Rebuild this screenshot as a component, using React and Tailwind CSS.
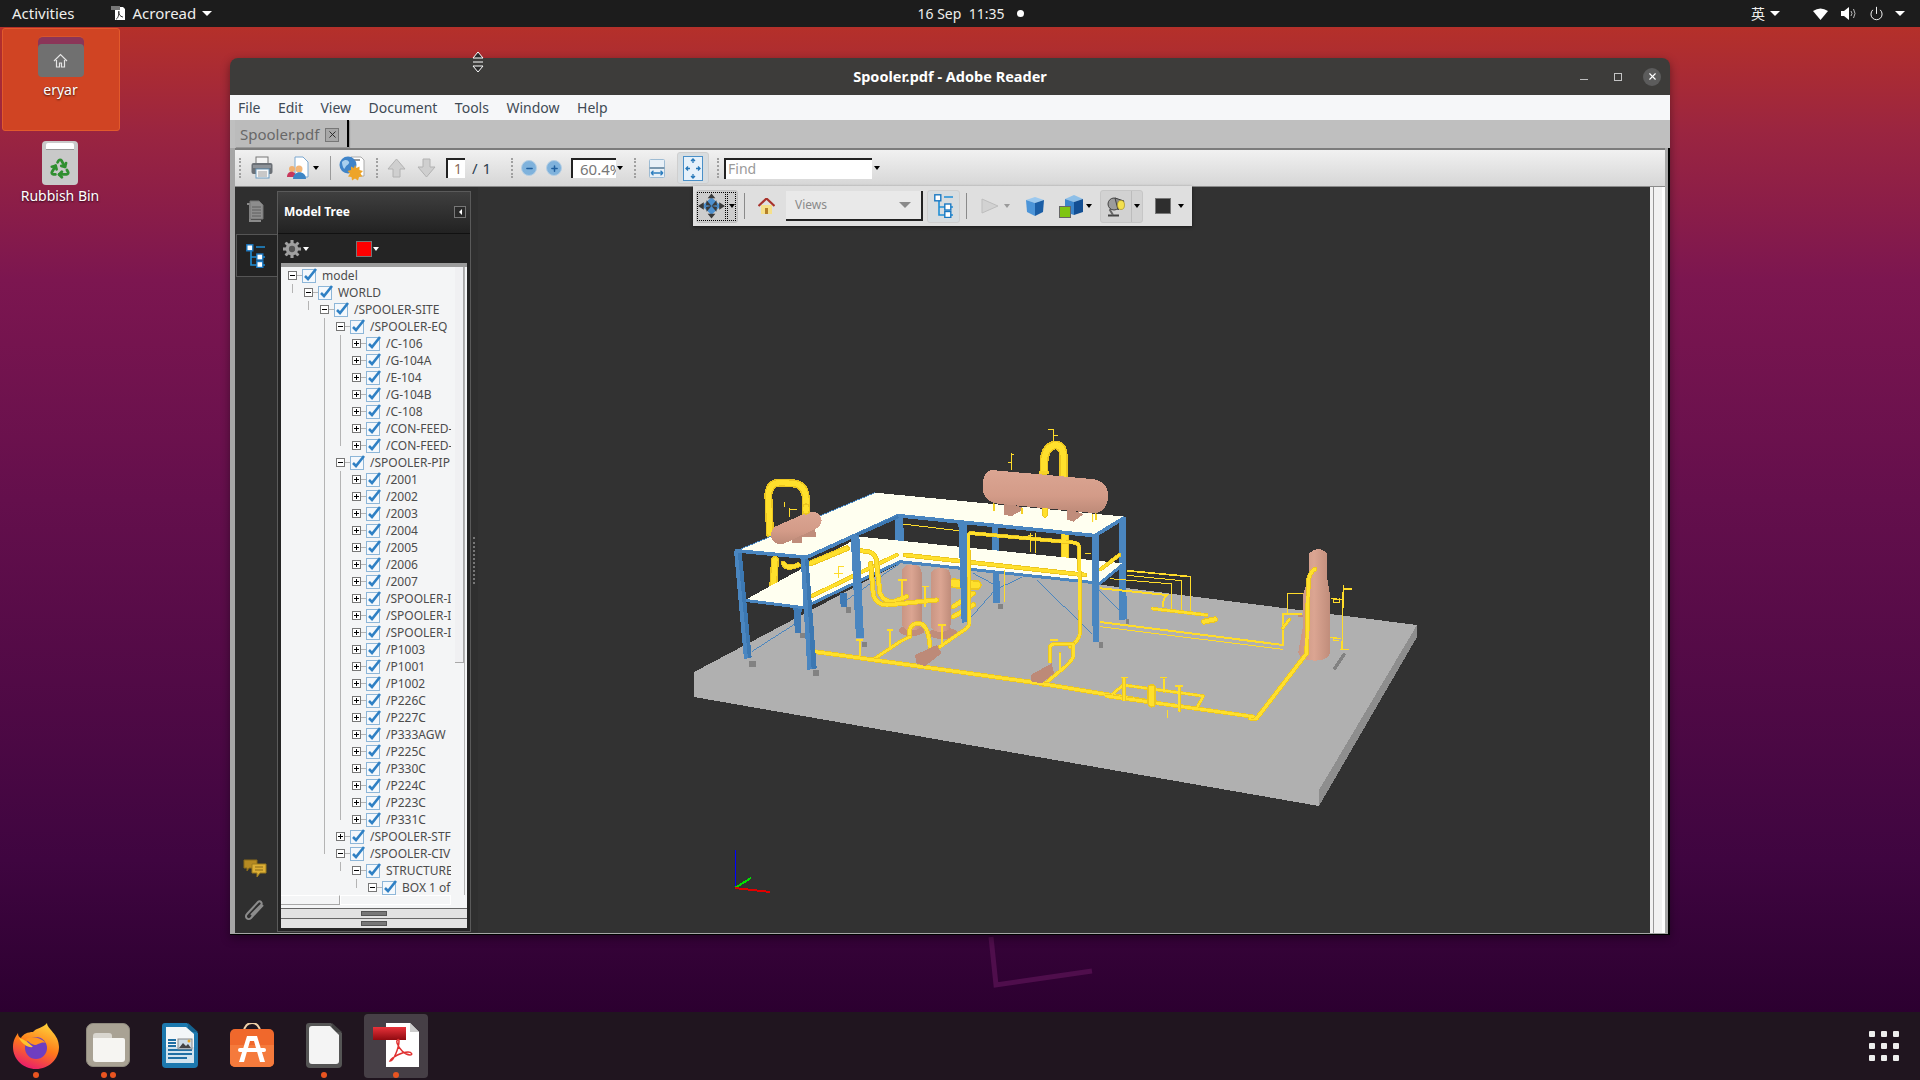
import React from "react";
import { Recycle, Power, X, Minus, Plus } from "lucide-react";

const Caret = ({ white, cls = "" }) => (
  <span className={`block w-0 h-0 border-x-[3px] border-x-transparent border-t-[4px] ${white ? "border-t-white" : "border-t-black"} ${cls}`} />
);
const BigCaret = ({ cls = "" }) => (
  <span className={`block w-0 h-0 border-x-[5px] border-x-transparent border-t-[5px] border-t-white ${cls}`} />
);
const Grip = ({ cls = "" }) => <span className={`block h-[20px] w-0 border-l-2 border-dotted border-[#a0a0a0] ${cls}`} />;

/* ---------- toolbar icons ---------- */
const PrintIcon = () => (
  <svg width="22" height="24" viewBox="0 0 22 24" className="block">
    <rect x="5" y="1" width="12" height="7" fill="#f4f4f4" stroke="#777" />
    <rect x="0.5" y="7" width="21" height="11" rx="2" fill="#6b7076" />
    <rect x="2" y="9" width="18" height="3" fill="#8d9298" />
    <rect x="5" y="13" width="13" height="9" fill="#f7f7f7" stroke="#6d9cc0" />
    <path d="M7 16h9M7 18h9M7 20h9" stroke="#999" />
  </svg>
);
const ShareIcon = () => (
  <svg width="22" height="24" viewBox="0 0 22 24" className="block">
    <path d="M8 1h8l5 5v15H8z" fill="#fff" stroke="#7aa7cf" />
    <circle cx="5" cy="13" r="3" fill="#f0b070" />
    <path d="M0 21c0-7 9-7 9 0z" fill="#c8375c" />
    <circle cx="12" cy="13" r="3.5" fill="#f3b678" />
    <path d="M6 23c0-9 13-9 13 0z" fill="#3d86c6" />
  </svg>
);
const GlobeIcon = () => (
  <svg width="26" height="26" viewBox="0 0 26 26" className="block">
    <path d="M12 2h10l3 3v16H12z" fill="#fff" stroke="#aaa" />
    <path d="M14 4h7v2h-7z" fill="#999" />
    <circle cx="9" cy="10" r="8.5" fill="#3f84c9" />
    <path d="M3 7c3-3 6-2 7 0s-3 3-4 6-3-3-3-6z" fill="#a8d0ef" />
    <path d="M16 10l1.500 3 3-1.500 0 3.500 3.500 1-2.500 2.500 2 3-3.500.5-1 3.500-3-2-3 2-.5-3.500-3.500-.5 2-3-2.500-2.500 3.500-1 0-3.500 3 1.500z" fill="#eda429" />
  </svg>
);
const BlockArrow = ({ down }) => (
  <svg width="19" height="20" viewBox="0 0 19 20" className="block">
    <path d={down ? "M6 1h7v8h5l-8.500 10L1 9h5z" : "M6 19h7v-8h5L9.500 1 1 11h5z"} fill="#cfcfcf" stroke="#b2b2b2" />
  </svg>
);
const ZoomBtn = ({ plus }) => (
  <span className="relative w-[16px] h-[16px] rounded-full bg-[#7fb2dc] border border-[#b5cfe4] flex items-center justify-center">
    {plus ? <Plus size={9} strokeWidth={4} color="#1f5f9e" /> : <Minus size={9} strokeWidth={4} color="#1f5f9e" />}
  </span>
);
const FitWidth = () => (
  <svg width="16" height="19" viewBox="0 0 16 19" className="block">
    <rect x="0.500" y="0.500" width="15" height="18" rx="1" fill="#e8f0f7" stroke="#9dbbd3" />
    <rect x="0.500" y="8" width="15" height="2" fill="#7a97ae" />
    <path d="M2 14h12M2 14l2.500-2.200M2 14l2.500 2.200M14 14l-2.500-2.200M14 14l-2.500 2.200" stroke="#2f7fbf" fill="none" strokeWidth="1.300" />
  </svg>
);
const FitPage = () => (
  <svg width="20" height="25" viewBox="0 0 20 25" className="block">
    <rect x="0.500" y="0.500" width="19" height="24" fill="#e6f1fa" stroke="#4a90c8" />
    <path d="M10 3v4M8 5l2-2 2 2M10 22v-4M8 20l2 2 2-2M3 12.500h4M5 10.500l-2 2 2 2M17 12.500h-4M15 10.500l2 2-2 2" stroke="#2577b8" fill="none" strokeWidth="1.300" />
  </svg>
);
const PagesIcon = () => (
  <svg width="18" height="22" viewBox="0 0 18 22" className="block">
    <path d="M1 4h3v17h11v-0" fill="none" stroke="#8a8a8a" strokeWidth="2" />
    <path d="M4 1h9l4 4v14H4z" fill="#8d8d8d" stroke="#777" />
    <path d="M6 7h9M6 10h9M6 13h9M6 16h9" stroke="#5f5f5f" />
  </svg>
);
const TreeIcon = ({ size = 20 }) => (
  <svg width={size} height={size * 1.2} viewBox="0 0 20 24" className="block">
    <path d="M5 6v15h6M5 13h6M10 3h9M16 13h3M16 21h3" fill="none" stroke="#1f8fd6" strokeWidth="1.600" />
    <rect x="0.800" y="0.800" width="6" height="6" fill="#fff" stroke="#1a78c2" strokeWidth="1.400" />
    <rect x="10.800" y="10" width="6" height="6" fill="#fff" stroke="#1a78c2" strokeWidth="1.400" />
    <rect x="10.800" y="17.500" width="6" height="6" fill="#fff" stroke="#1a78c2" strokeWidth="1.400" />
  </svg>
);
const GearIcon = () => (
  <svg width="18" height="18" viewBox="0 0 20 20" className="block">
    <g fill="#a0a0a0">
      {[0, 45, 90, 135, 180, 225, 270, 315].map((a) => (
        <rect key={a} x="8.500" y="0" width="3" height="20" transform={`rotate(${a} 10 10)`} />
      ))}
      <circle cx="10" cy="10" r="7" />
    </g>
    <circle cx="10" cy="10" r="3.500" fill="#555" />
  </svg>
);
const CommentIcon = () => (
  <svg width="24" height="19" viewBox="0 0 24 19" className="block">
    <path d="M1 1h13v8H6l-2 3V9H1z" fill="#b58a22" stroke="#8a6a18" />
    <path d="M9 5h14v9h-6l-3 4v-4H9z" fill="#dcae35" stroke="#9a7a1f" />
    <path d="M12 8h8M12 11h8" stroke="#8a6a18" />
  </svg>
);
const ClipIcon = () => (
  <svg width="21" height="23" viewBox="0 0 21 23" className="block">
    <path d="M19 6L7 19c-3 3-7-1-4-4L14 3c2-2 5 1 3 3L7 16" fill="none" stroke="#8c8c8c" strokeWidth="2" />
  </svg>
);

/* ---------- floating 3D toolbar icons ---------- */
const NavIcon = () => (
  <svg width="28" height="26" viewBox="0 0 28 26" className="block">
    <path d="M14 4l10 9-10 9-10-9z" fill="#4d90cf" />
    <g fill="#3a3a3a">
      <path d="M14 0l4 5h-8zM14 26l4-5h-8zM0 13l6-4v8zM28 13l-6-4v8z" />
      <path d="M9 7l5 6-6 1zM19 7l-5 6 6 1zM9 19l5-6-6-1zM19 19l-5-6 6-1z" />
    </g>
  </svg>
);
const HomeIcon = () => (
  <svg width="17" height="16" viewBox="0 0 17 16" className="block">
    <path d="M3 7h11v9H3z" fill="#f5e08a" />
    <path d="M7 10h3v6H7z" fill="#b4802a" />
    <path d="M0.500 8L8.500 0.500 16.500 8" fill="none" stroke="#a8332c" strokeWidth="2.200" />
  </svg>
);
const PlayIcon = () => (
  <svg width="18" height="16" viewBox="0 0 18 16" className="block">
    <path d="M1 1l16 7-16 7z" fill="#d2d2d2" stroke="#bdbdbd" />
  </svg>
);
const CubeIcon = () => (
  <svg width="20" height="20" viewBox="0 0 20 20" className="block">
    <path d="M1 4l9-3 9 3-9 3z" fill="#9cc9ef" />
    <path d="M1 4l9 3v13l-8-4z" fill="#4b94d8" />
    <path d="M19 4l-9 3v13l8-4z" fill="#1b5ea6" />
  </svg>
);
const CubeGreenIcon = () => (
  <svg width="24" height="24" viewBox="0 0 24 24" className="block">
    <path d="M6 5l9-4 9 4-9 3z" fill="#8dbfe8" />
    <path d="M6 5l9 3v13l-9-3z" fill="#3c86cc" />
    <path d="M24 5l-9 3v13l9-3z" fill="#134f93" />
    <rect x="0.500" y="12.500" width="11" height="11" fill="#7ec512" stroke="#666" />
  </svg>
);
const LampIcon = () => (
  <svg width="20" height="22" viewBox="0 0 20 22" className="block">
    <path d="M2 20.500h11" stroke="#444" strokeWidth="2" />
    <path d="M7 20l-3-5 4-5" fill="none" stroke="#666" strokeWidth="2" />
    <circle cx="8" cy="9" r="6" fill="#9c9c9c" stroke="#444" />
    <path d="M9 3l9 3-6 9z" fill="#8d8d8d" stroke="#444" />
    <ellipse cx="15" cy="10" rx="3.500" ry="4.500" fill="#f3e04f" stroke="#a59125" strokeWidth="0.700" />
  </svg>
);

/* ---------- dock icons ---------- */
const Firefox = () => (
  <svg width="46" height="47" viewBox="0 0 46 47" className="block">
    <defs>
      <linearGradient id="ff1" x1="0.700" y1="0" x2="0.300" y2="1">
        <stop offset="0" stopColor="#ffd23a" />
        <stop offset="0.500" stopColor="#ff7a1a" />
        <stop offset="1" stopColor="#e8186e" />
      </linearGradient>
    </defs>
    <path d="M34 1c0 6 12 11 12 24 0 12-10 22-23 22S0 37 0 25c0-7 3-11 5-14 0 3 1 4 3 5 2-4 7-6 12-6 3-4 10-4 14-9z" fill="url(#ff1)" />
    <circle cx="23" cy="26" r="11" fill="#6e3ec0" />
    <path d="M13 17c6-3 14-2 20 4-3-1-5 0-8 1-3 2-7 1-12-5z" fill="#ff9420" />
    <path d="M6 16c4 1 8 3 14 9-5 1-11-3-14-9z" fill="#ffc42e" />
  </svg>
);
const FilesIcon = () => (
  <span className="block w-[44px] h-[44px] rounded-[7px] bg-[#a9a294] border border-[#8f8a7e] p-[6px] pt-[9px] relative">
    <span className="block w-[19px] h-[5px] rounded-t-[3px] bg-[#d9d6cf]" />
    <span className="block w-[32px] h-[24px] rounded-b-[3px] rounded-tr-[2px] bg-[#f6f5f2]" />
  </span>
);
const Writer = () => (
  <svg width="36" height="45" viewBox="0 0 36 45" className="block">
    <path d="M3 0h22l11 10v31a4 4 0 0 1-4 4H4a4 4 0 0 1-4-4V3a3 3 0 0 1 3-3z" fill="#1c78ae" />
    <path d="M26 0l10 9h-10z" fill="#15628f" />
    <path d="M4 4h20l8 7v29H4z" fill="#f3f6f8" />
    <path d="M4 24h28v16H4z" fill="#d2e3ee" />
    <path d="M6 17h8M6 20h8M6 23h8M6 27h24M6 31h24M6 35h19M6 39h0" stroke="#1f6ea3" strokeWidth="1.800" />
    <rect x="16" y="16" width="14" height="10" fill="#cfdde6" stroke="#888" />
    <path d="M17 25l4-5 3 3 2-2 3 4z" fill="#444" />
    <circle cx="27" cy="18" r="1.500" fill="#eaa520" />
  </svg>
);
const SoftwareIcon = () => (
  <svg width="44" height="44" viewBox="0 0 44 44" className="block">
    <path d="M14 9c0-12 16-12 16 0" fill="none" stroke="#f0d0a8" strokeWidth="2" />
    <rect x="0" y="6" width="44" height="38" rx="5" fill="#f0682c" />
    <path d="M0 22h44v17a5 5 0 0 1-5 5H5a5 5 0 0 1-5-5z" fill="#f57a3c" />
    <path d="M17 13h10l8 26h-5l-6-21h-4l-6 21H9z" fill="#fff" />
    <rect x="8" y="25" width="28" height="4" rx="2" fill="#fff" />
  </svg>
);
const LoDoc = () => (
  <svg width="36" height="45" viewBox="0 0 36 45" className="block">
    <path d="M3 0h22l11 10v31a4 4 0 0 1-4 4H4a4 4 0 0 1-4-4V3a3 3 0 0 1 3-3z" fill="#555" />
    <path d="M26 0l10 9h-10z" fill="#444" />
    <path d="M6 3h18l9 9v26a3 3 0 0 1-3 3H6a3 3 0 0 1-3-3V6a3 3 0 0 1 3-3z" fill="#f4f4f4" />
  </svg>
);
const AcroDoc = () => (
  <svg width="46" height="44" viewBox="0 0 46 44" className="block">
    <path d="M13 0h24l9 9v35H13z" fill="#fff" />
    <path d="M37 0l9 9h-9z" fill="#ccc" />
    <defs>
      <linearGradient id="rb" x1="0" y1="0" x2="0" y2="1">
        <stop offset="0" stopColor="#e8323a" />
        <stop offset="1" stopColor="#8e0a10" />
      </linearGradient>
    </defs>
    <rect x="0" y="4" width="33" height="13" fill="url(#rb)" />
    <path d="M17 38c4 0 9-14 9-20 0-3-3-1-2 2 2 6 8 12 13 12 3 0 2-3-2-3-6 0-16 5-18 9z" fill="none" stroke="#e03030" strokeWidth="1.500" />
  </svg>
);
const SmallAcro = () => (
  <svg width="15" height="15" viewBox="0 0 15 15" className="block">
    <path d="M4 1h8l2 2v11H4z" fill="#fff" />
    <rect x="0" y="0" width="9" height="4" fill="#777" />
    <path d="M5 13c2 0 3-5 3-7s-1 0 0 2 3 3 4 3" fill="none" stroke="#333" />
  </svg>
);

/* ---------- scene ---------- */
const Tube = ({ d, w, hi }) => (
  <g fill="none" strokeLinecap="round" strokeLinejoin="round">
    <path d={d} stroke="#ecc620" strokeWidth={w} />
    <path d={d} stroke={hi || "#ffe02c"} strokeWidth={w * 0.65} />
  </g>
);
const Thin = ({ d, w = 3 }) => <path d={d} fill="none" stroke="#ffdc2a" strokeWidth={w} />;
const Scene = () => (
  <svg width="1172" height="746" viewBox="478 187 1172 746" shapeRendering="crispEdges" className="block">
    <defs>
      <linearGradient id="pk" x1="0" y1="0" x2="0" y2="1">
        <stop offset="0" stopColor="#dba592" />
        <stop offset="0.600" stopColor="#d39b88" />
        <stop offset="1" stopColor="#bd8a78" />
      </linearGradient>
      <linearGradient id="pkh" x1="0" y1="0" x2="1" y2="0">
        <stop offset="0" stopColor="#c99583" />
        <stop offset="0.500" stopColor="#dba592" />
        <stop offset="1" stopColor="#c08d7b" />
      </linearGradient>
    </defs>
    <polygon points="694,672 906,560 1417,625 1417,625 1319,790 1319,806 694,697" fill="#b0b0b0" />
    <polygon points="1319,790 1417,625 1417,637 1319,806" fill="#8e8e8e" />

    {/* axes */}
    <path d="M735 850V888" stroke="#0000ff" strokeWidth="1" />
    <path d="M735 888L751 878" stroke="#00e000" strokeWidth="2" />
    <path d="M735 888L770 892" stroke="#e00000" strokeWidth="2" />

    <g transform="translate(680 420) scale(0.33333)">
      {/* behind pipes */}
      <Tube d="M270 340L265 225Q268 188 300 188L340 190Q378 195 378 240L378 280" w={24} />
      <Tube d="M285 420L280 495" w={24} />
      <Tube d="M310 430Q320 450 355 435" w={16} />
      <Tube d="M1155 340V410" w={26} />
      <Tube d="M820 490L890 495" w={30} />
      <Tube d="M820 560L880 520M820 590L880 555" w={16} />
      {/* braces */}
      <g stroke="#4a86c0" strokeWidth="3" fill="none">
        <path d="M215 695L345 612M875 590L945 510L1025 472M945 495L880 460M1070 480L1235 640M1258 510L1318 570M500 540L660 430" />
      </g>
      {/* far columns */}
      <polygon points="935,320 955,320 960,548 940,548" fill="#4a86c0" />
      <polygon points="340,560 365,565 362,640 345,640" fill="#3f7ab5" />
      <polygon points="480,520 500,520 500,562 482,562" fill="#3f7ab5" />
      <polygon points="1318,295 1338,290 1340,598 1318,600" fill="#4a86c0" />
      <polygon points="645,290 670,288 672,425 645,430" fill="#4a86c0" />
      <g fill="#828282">
        <rect x="207" y="722" width="20" height="18" />
        <rect x="398" y="750" width="18" height="18" />
        <rect x="545" y="665" width="15" height="16" />
        <rect x="498" y="562" width="15" height="16" />
        <rect x="360" y="640" width="14" height="15" />
        <rect x="955" y="552" width="14" height="15" />
        <rect x="1257" y="667" width="13" height="17" />
        <rect x="1338" y="598" width="10" height="14" />
      </g>
      {/* lower deck */}
      <polygon points="195,540 540,350 1330,430 1260,487 660,425 370,562" fill="#fffff0" />
      <path d="M195 541L370 563L660 425L1260 490L1330 432" fill="none" stroke="#4a86c0" strokeWidth="9" />
      <Tube d="M398 527L650 405" w={13} />
      <Tube d="M392 430L500 385" w={18} />
      <Tube d="M675 405L1215 465" w={14} />
      <Tube d="M1262 448L1318 405" w={12} />
      <path d="M668 312L860 335M960 345L1060 355" stroke="#ffdc2a" strokeWidth="3" />
      {/* drums */}
      <ellipse cx="695" cy="632" rx="38" ry="16" fill="#c08d7b" />
      <ellipse cx="790" cy="640" rx="42" ry="18" fill="#c08d7b" />
      <rect x="665" y="435" width="60" height="195" rx="22" fill="url(#pkh)" />
      <rect x="752" y="445" width="60" height="190" rx="22" fill="url(#pkh)" />
      {/* mid pipes */}
      <Tube d="M540 392L565 395Q590 400 590 430L600 520Q610 545 640 545L680 530" w={15} />
      <Tube d="M572 430L580 525Q590 555 620 555L770 540" w={15} />
      <Tube d="M688 650Q685 610 715 610Q745 610 750 680" w={14} />
      <Tube d="M585 715L660 665L690 650" w={11} />
      <Tube d="M780 680L860 625Q870 615 868 600L865 345Q868 338 880 340L1185 368Q1198 372 1198 385L1200 640Q1195 665 1170 680" w={12} />
      <Tube d="M1110 725V680Q1112 672 1130 672L1180 672L1180 710Q1170 730 1150 745L1090 795" w={12} />
      <Tube d="M1140 700L1140 750" w={8} />
      <Thin d="M665 480V535M735 500V560M785 615V675M630 630V690M540 660V720" w={6} />
      <Thin d="M655 480H680M725 500H748M775 615H798M620 630H640M528 660H550M1110 660H1135" w={4} />
      <Thin d="M475 440V475M462 460H490M475 440H492M995 100V150M995 105H1003M985 128H995M315 245V262M330 265V290M330 268H350" w={3} />
      <Thin d="M1122 30V70M1105 30H1122M1122 48H1135" w={3} />
      <Thin d="M1068 340V400M1052 340V395M975 450V545M1215 402H1232M1060 345L1010 355" w={3} />
      {/* main pipe */}
      <Tube d="M405 695L1080 790L1440 850" w={14} />
      {/* pumps */}
      <polygon points="705,705 770,675 785,700 735,738 710,730" fill="#bd8a78" />
      <polygon points="1052,765 1115,730 1122,760 1085,790 1055,785" fill="#bd8a78" />
      {/* columns front */}
      <polygon points="162,392 185,395 215,712 192,718" fill="#4a86c0" />
      <polygon points="173,394 185,395 215,712 204,716" fill="#3c78b2" />
      <polygon points="512,345 538,345 552,655 528,655" fill="#4a86c0" />
      <polygon points="835,305 860,310 862,605 845,610" fill="#4a86c0" />
      <polygon points="1235,345 1258,345 1258,665 1238,665" fill="#4a86c0" />
      <polygon points="362,412 385,412 410,745 382,750" fill="#4a86c0" />
      <polygon points="375,412 385,412 410,745 395,748" fill="#3c78b2" />
      {/* upper deck */}
      <polygon points="175,390 585,218 1335,290 1245,345 655,285 380,410" fill="#fffff0" />
      <path d="M165 392L380 412L655 287L1245 347L1335 292" fill="none" stroke="#4a86c0" strokeWidth="11" />
      <path d="M175 390L585 218" fill="none" stroke="#4a86c0" strokeWidth="3" />
      <path d="M530 345L655 290" fill="none" stroke="#3c78b2" strokeWidth="9" />
      {/* left vessel */}
      <polygon points="335,345 405,320 408,350 365,352 365,368 335,368" fill="#c08d7b" />
      <path d="M285 320L385 276Q420 272 425 300Q422 320 410 325L310 372Q280 375 272 350Q272 330 285 320z" fill="url(#pk)" />
      <Tube d="M378 262V272" w={24} />
      {/* big vessel supports */}
      <polygon points="972,245 1025,262 1025,272 995,288 972,285" fill="#c08d7b" />
      <polygon points="1160,265 1212,282 1180,305 1160,298" fill="#c08d7b" />
      <Tube d="M1095 265V285" w={16} />
      <Tube d="M1238 285V305M1248 282V298M942 252V272M1026 265V280" w={4} />
      <Tube d="M1150 170V105Q1148 75 1125 75Q1095 80 1092 125V155" w={26} />
      <path d="M935 150L1245 178Q1285 190 1285 230Q1280 270 1250 280L945 250Q905 235 908 195Q910 155 935 150z" fill="url(#pk)" />
      <rect x="1078" y="152" width="30" height="10" fill="#f7d426" />
    </g>

    <g transform="translate(1000 420) scale(0.33333)">
      {/* thin far lines */}
      <Thin d="M380 452L572 470V572" w={5} />
      <Thin d="M380 466L545 482V572" w={3} />
      <Thin d="M330 476L516 492V572" w={3} />
      <Thin d="M300 505L500 525Q488 535 490 560" w={6} />
      <Tube d="M458 566L620 585" w={11} />
      <Tube d="M612 605L645 598" w={18} />
      <Thin d="M300 606L850 675V582H905" w={6} />
      <Thin d="M300 620L848 688" w={3} />
      <Thin d="M863 582V520H908" w={4} />
      <Tube d="M848 625L868 598" w={10} />
      <path d="M1002 748L1034 700" stroke="#828282" strokeWidth="10" />
      <path d="M908 588H895" stroke="#c08d7b" strokeWidth="6" />
      {/* tower */}
      <path d="M928 400Q955 375 982 400L982 478L990 525L990 695Q990 720 945 722Q895 720 895 695L908 625L910 520L928 470z" fill="url(#pkh)" />
      <Tube d="M945 447Q925 460 925 490L920 700L770 895L750 895" w={14} />
      <Thin d="M1030 495L1026 690M1030 507H1055M1020 688H1046M992 535L1030 540M990 652L1022 656" w={4} />
      <Thin d="M1000 535V547H1020V535M1000 650V662H1016" w={3} />
      {/* valve group */}
      <Tube d="M330 828L370 795L610 828L590 865" w={10} />
      <Tube d="M320 828L760 890" w={13} />
      <Tube d="M372 775V840" w={10} />
      <Tube d="M455 805V850" w={26} />
      <Tube d="M492 778V815" w={8} />
      <Tube d="M538 800V872" w={9} />
      <Thin d="M362 773H385M480 772H500M525 798H550M502 870V895" w={4} />
    </g>
  </svg>
);

/* ---------- model tree ---------- */
const tree = [
  ["model", 0, "-"], ["WORLD", 1, "-"], ["/SPOOLER-SITE", 2, "-"], ["/SPOOLER-EQ", 3, "-"],
  ["/C-106", 4, "+"], ["/G-104A", 4, "+"], ["/E-104", 4, "+"], ["/G-104B", 4, "+"], ["/C-108", 4, "+"],
  ["/CON-FEED-", 4, "+"], ["/CON-FEED-", 4, "+"], ["/SPOOLER-PIP", 3, "-"],
  ["/2001", 4, "+"], ["/2002", 4, "+"], ["/2003", 4, "+"], ["/2004", 4, "+"], ["/2005", 4, "+"], ["/2006", 4, "+"], ["/2007", 4, "+"],
  ["/SPOOLER-I", 4, "+"], ["/SPOOLER-I", 4, "+"], ["/SPOOLER-I", 4, "+"],
  ["/P1003", 4, "+"], ["/P1001", 4, "+"], ["/P1002", 4, "+"], ["/P226C", 4, "+"], ["/P227C", 4, "+"], ["/P333AGW", 4, "+"],
  ["/P225C", 4, "+"], ["/P330C", 4, "+"], ["/P224C", 4, "+"], ["/P223C", 4, "+"], ["/P331C", 4, "+"],
  ["/SPOOLER-STF", 3, "+"], ["/SPOOLER-CIV", 3, "-"], ["STRUCTURE", 4, "-"], ["BOX 1 of", 5, "-"],
];
const hasNext = (i, level) => {
  for (let j = i + 1; j < tree.length; j++) {
    if (tree[j][1] < level) return false;
    if (tree[j][1] === level) return true;
  }
  return false;
};
const Check = () => (
  <svg width="16" height="15" viewBox="0 0 16 15" className="block shrink-0">
    <rect x="0.500" y="1.500" width="13" height="13" fill="#f4f8fc" stroke="#8db6d8" />
    <path d="M3 8l3 3 8-10" fill="none" stroke="#2f80c4" strokeWidth="2.600" />
  </svg>
);
const Row = ({ label, depth, state, i }) => (
  <div className="relative h-[17px] flex items-center whitespace-nowrap" style={{ paddingLeft: 7 + depth * 16 }}>
    {Array.from({ length: depth }, (_, k) => k + 1).map((lvl) =>
      lvl === depth || hasNext(i, lvl) ? (
        <span
          key={lvl}
          className="absolute top-0 w-px bg-[#b4b4b4]"
          style={{ left: 11 + (lvl - 1) * 16 + 0, height: lvl === depth && !hasNext(i, lvl) ? 9 : 17 }}
        />
      ) : null
    )}
    <span className="relative z-10 block w-[9px] h-[9px] border border-[#777] bg-white shrink-0">
      <span className="absolute left-[1px] top-[3px] w-[5px] h-px bg-black" />
      {state === "+" && <span className="absolute left-[3px] top-[1px] w-px h-[5px] bg-black" />}
    </span>
    <span className="w-[5px] h-px bg-[#b4b4b4] shrink-0" />
    <Check />
    <span className="ml-[4px] text-[12px] leading-[17px] text-[#4c4c4c]">{label}</span>
  </div>
);

const ToolBtn = ({ cls = "", children }) => (
  <span className={`flex items-center justify-center rounded-[3px] border border-[#cfcfcf] bg-[#d8dde0] ${cls}`}>{children}</span>
);

export default function App() {
  return (
    <div className="relative w-[1920px] h-[1080px] overflow-hidden flex flex-col font-['Noto_Sans','Noto_Sans_CJK_SC',sans-serif] bg-[linear-gradient(180deg,#b5302a_27px,#9b2540_130px,#7c1650_280px,#640f4c_500px,#3f0540_860px,#2c0030_1012px)]">
      {/* top bar */}
      <div className="h-[27px] shrink-0 bg-[#1c1c1c] grid grid-cols-3 items-center text-[15px] text-[#eeeeec]">
        <div className="flex items-center pl-[12px]">
          <span>Activities</span>
          <span className="ml-[36px]"><SmallAcro /></span>
          <span className="ml-[7px]">Acroread</span>
          <BigCaret cls="ml-[6px]" />
        </div>
        <div className="flex items-center justify-center pl-[22px] text-[14px]">
          <span>16 Sep&nbsp;&nbsp;11:35</span>
          <span className="ml-[13px] block w-[7px] h-[7px] rounded-full bg-white" />
        </div>
        <div className="flex items-center justify-end pr-[15px]">
          <span className="text-[14px] leading-none">英</span>
          <BigCaret cls="ml-[5px]" />
          <svg width="15" height="12" viewBox="0 0 15 12" className="block ml-[33px]">
            <path d="M0 3Q7.500-2 15 3L7.500 12z" fill="#fff" />
          </svg>
          <svg width="15" height="13" viewBox="0 0 15 13" className="block ml-[13px]">
            <path d="M0 4h3l5-4v13l-5-4H0z" fill="#fff" />
            <path d="M10 4q2 2.500 0 5M12.500 2q3 4.500 0 9" fill="none" stroke="#bbb" />
          </svg>
          <Power size={15} color="#fff" strokeWidth={1.500} className="ml-[13px]" />
          <BigCaret cls="ml-[11px]" />
        </div>
      </div>

      {/* desktop */}
      <div className="relative flex-1">
        <svg width="260" height="70" viewBox="0 0 260 70" className="absolute left-[985px] top-[900px] block">
          <path d="M6 10l5 48 96-14" fill="none" stroke="#4f0e4c" strokeWidth="5" />
        </svg>
        <div className="w-[120px] flex flex-col items-center text-white text-[14px] [text-shadow:0_1px_2px_rgba(0,0,0,0.7)]">
          <div className="mt-[1px] ml-[1px] w-[118px] h-[103px] rounded-[3px] bg-[#d04423] border border-[#e25a2c] flex flex-col items-center">
            <div className="relative mt-[7px] w-[46px] h-[41px]">
              <div className="w-[46px] h-[12px] rounded-t-[5px] bg-[#8b3558] border-t border-[#d8542a]" />
              <div className="absolute left-0 top-[8px] w-[46px] h-[33px] rounded-[4px] bg-[#707070] flex items-center justify-center">
                <svg width="15" height="15" viewBox="0 0 15 15" className="block">
                  <path d="M1 8L7.500 1.500 14 8M3.500 7v7h3v-4h2v4h3V7" fill="none" stroke="#e6e6e6" strokeWidth="1.200" />
                </svg>
              </div>
            </div>
            <span className="mt-[3px] leading-[20px]">eryar</span>
          </div>
          <div className="mt-[10px] w-[36px] h-[44px] rounded-[4px] bg-[#c9c9c9] relative flex flex-col items-center">
            <span className="mt-[2px] block w-[28px] h-[7px] bg-white rounded-t-[2px] border-b border-[#999]" />
            <Recycle size={22} color="#2f8f2f" strokeWidth={3} className="mt-[7px]" />
          </div>
          <span className="mt-[1px] leading-[20px]">Rubbish Bin</span>
        </div>

        {/* window */}
        <div className="absolute left-[230px] top-[31px] w-[1440px] h-[877px] flex flex-col rounded-t-[8px] overflow-hidden shadow-[0_3px_10px_rgba(0,0,0,0.4)]">
          <div className="h-[37px] shrink-0 bg-[#3d3c3a] grid grid-cols-[1fr_auto_1fr] items-center">
            <span />
            <span className="text-[14.5px] font-bold text-white">Spooler.pdf - Adobe Reader</span>
            <div className="flex items-center justify-end pr-[9px]">
              <span className="block w-[8px] h-px bg-[#bdbdbd] mt-[6px] -translate-x-[3px]" />
              <span className="ml-[26px] block w-[8px] h-[8px] border border-[#c4c4c4] -translate-x-[3px]" />
              <span className="ml-[18px] w-[18px] h-[18px] rounded-full bg-[#5c5c5c] flex items-center justify-center">
                <X size={11} color="#fff" strokeWidth={2.500} />
              </span>
            </div>
          </div>
          <div className="h-[25px] shrink-0 bg-[#f6f7f9] flex items-center gap-[17.5px] pl-[8px] text-[14px] text-[#3f4a55]">
            {["File", "Edit", "View", "Document", "Tools", "Window", "Help"].map((m) => (
              <span key={m}>{m}</span>
            ))}
          </div>
          <div className="h-[28px] shrink-0 bg-[#bfbfbf] flex pl-[5px]">
            <div className="w-[114px] h-[27px] bg-[#bbbbbb] border-r-2 border-black flex items-center pl-[5px] pt-[2px] shadow-[1px_1px_1px_rgba(0,0,0,0.2)]">
              <span className="text-[15px] text-[#686868] leading-[25px]">Spooler.pdf</span>
              <span className="ml-[6px] w-[14px] h-[14px] border border-[#777] bg-[#a8a8a8] flex items-center justify-center">
                <X size={11} color="#222" strokeWidth={2} />
              </span>
            </div>
          </div>

          <div className="flex-1 flex flex-col min-h-0 bg-[#a6a6a6] pl-[5px] pr-[3px] pb-[1px] border-r-2 border-r-black border-b border-b-black">
            {/* toolbar */}
            <div className="h-[39px] shrink-0 flex items-center border-t-2 border-[#7c7c7c] border-b border-b-[#8a8a8a] bg-[linear-gradient(180deg,#f1f1f1,#d6d6d6)]">
              <Grip cls="ml-[4px]" />
              <span className="ml-[10px]"><PrintIcon /></span>
              <span className="ml-[14px]"><ShareIcon /></span>
              <Caret cls="ml-[4px]" />
              <span className="ml-[11px] block w-px h-[24px] bg-[#9a9a9a]" />
              <span className="ml-[8px]"><GlobeIcon /></span>
              <Grip cls="ml-[11px]" />
              <span className="ml-[9px]"><BlockArrow /></span>
              <span className="ml-[11px]"><BlockArrow down /></span>
              <span className="ml-[10px] w-[19px] h-[20px] bg-white border-t-2 border-l-2 border-[#222] flex items-center justify-end pr-[3px] text-[14px] text-[#8a6a5a] leading-none">1</span>
              <span className="ml-[7px] w-[19px] text-[15px] text-[#2c3e50] whitespace-pre flex justify-between"><span>/</span><span>1</span></span>
              <Grip cls="ml-[20px]" />
              <span className="ml-[8px]"><ZoomBtn /></span>
              <span className="ml-[9px]"><ZoomBtn plus /></span>
              <span className="ml-[9px] w-[45px] h-[20px] bg-white border-t-2 border-l-2 border-[#222] overflow-hidden flex items-center pl-[7px] text-[15px] text-[#777] leading-none">60.4%</span>
              <Caret cls="ml-[1px]" />
              <Grip cls="ml-[11px]" />
              <span className="ml-[13px]"><FitWidth /></span>
              <ToolBtn cls="ml-[12px] w-[32px] h-[32px]"><FitPage /></ToolBtn>
              <Grip cls="ml-[8px]" />
              <span className="ml-[5px] w-[148px] h-[21px] bg-white border-t-2 border-l-2 border-[#222] flex items-center pl-[2px] text-[14px] text-[#9a9a9a] leading-none">Find</span>
              <Caret cls="ml-[2px]" />
            </div>

            {/* body */}
            <div className="flex-1 flex min-h-0 relative">
              {/* sidebar */}
              <div className="w-[243px] shrink-0 bg-[#2f2f2f] flex relative">
                <div className="w-[42px] shrink-0 flex flex-col items-center">
                  <div className="h-[47px] w-full flex items-center justify-center pr-[3px]"><PagesIcon /></div>
                  <div className="h-[43px] w-[41px] ml-[1px] bg-[#232323] border-t border-l border-b border-[#555] flex items-center justify-center pr-[2px]"><TreeIcon /></div>
                  <div className="flex-1" />
                  <div className="mb-[21px] pr-[3px]"><CommentIcon /></div>
                  <div className="mb-[11px] pr-[3px]"><ClipIcon /></div>
                </div>
                <div className="w-[194px] shrink-0 mt-[4px] mb-[1px] flex flex-col border border-[#5a5a5a] bg-[#242424]">
                  <div className="h-[42px] shrink-0 bg-[linear-gradient(180deg,#3f3f3f,#222222)] border-b border-[#111] flex items-center pl-[6px] pr-[4px] pb-[2px]">
                    <span className="text-[12px] font-bold text-white flex-1">Model Tree</span>
                    <span className="w-[12px] h-[12px] border border-[#777] bg-[#2a2a2a] flex items-center justify-center">
                      <span className="block w-0 h-0 border-y-[3px] border-y-transparent border-r-[3px] border-r-white" />
                    </span>
                  </div>
                  <div className="h-[29px] shrink-0 flex items-center pl-[5px]">
                    <GearIcon />
                    <Caret white cls="ml-[2px]" />
                    <span className="ml-[47px] w-[16px] h-[16px] bg-[#ff0000] border border-[#777]" />
                    <Caret white cls="ml-[1px]" />
                  </div>
                  <div className="flex-1 min-h-0 mx-[3px] mb-[3px] bg-[#f4f5f6] border-t-4 border-[#9c9c9c] flex flex-col">
                    <div className="h-[628px] shrink-0 relative flex">
                      <div className="w-[170px] shrink-0 overflow-hidden">
                        {tree.map(([label, depth, state], i) => (
                          <Row key={i} i={i} label={label} depth={depth} state={state} />
                        ))}
                      </div>
                      <div className="ml-[4px] w-[10px] h-full border-r border-white">
                        <div className="h-[396px] border-b border-r border-[#a8a8a8] bg-[#f0f0f2]" />
                      </div>
                      <span className="ml-[-1px] w-px h-full bg-[#b4b4b4]" />
                    </div>
                    <div className="h-[10px] shrink-0 flex w-[170px] mt-0">
                      <span className="w-[59px] h-full border-t border-white border-r border-r-[#a8a8a8] border-b border-b-[#a8a8a8]" />
                      <span className="flex-1 h-full border border-white" />
                    </div>
                    <div className="mt-[3px] h-[10px] bg-[#e2e2e2] border-t border-[#666] flex items-center justify-center shrink-0">
                      <span className="block w-[26px] h-[5px] bg-[#777] border border-[#555]" />
                    </div>
                    <div className="h-[10px] bg-[#e2e2e2] border-t border-[#666] flex items-center justify-center shrink-0">
                      <span className="block w-[26px] h-[5px] bg-[#777] border border-[#555]" />
                    </div>
                  </div>
                </div>
                <span className="absolute left-[238px] top-[350px] w-[3px] h-[47px] border-l-2 border-dotted border-[#777]" />
              </div>

              {/* canvas */}
              <div className="w-[1172px] shrink-0 relative bg-[#323232] overflow-hidden">
                <Scene />
              </div>
              {/* right strip */}
              <div className="w-[15px] shrink-0 bg-[#f2f2f2] flex">
                <span className="ml-[3px] w-px bg-[#999]" />
                <span className="ml-[8px] w-[3px] bg-white" />
              </div>

              {/* floating 3D toolbar */}
              <div className="absolute left-[458px] -top-px w-[499px] h-[40px] bg-[#dfdfdf] shadow-[0_1px_3px_rgba(0,0,0,0.5)] flex items-center">
                <span className="ml-[3px] w-[42px] h-[33px] rounded-[3px] bg-[#cdcdcd] border border-[#c0c0c0] flex items-center">
                  <span className="w-[29px] h-[29px] border border-dotted border-black flex items-center justify-center"><NavIcon /></span>
                  <span className="ml-[1px] w-[9px] h-[29px] border border-dotted border-black flex items-center justify-center"><Caret /></span>
                </span>
                <span className="ml-[6px] block w-px h-[26px] bg-[#8a8a8a]" />
                <span className="ml-[13px]"><HomeIcon /></span>
                <span className="ml-[11px] w-[137px] h-[30px] bg-[#e9e9e9] border-b-2 border-r-2 border-[#222] flex items-center justify-between pl-[9px] pr-[10px] text-[12px] text-[#8a8a8a]">
                  <span>Views</span>
                  <span className="block w-0 h-0 border-x-[6px] border-x-transparent border-t-[6px] border-t-[#8a8a8a]" />
                </span>
                <ToolBtn cls="ml-[4px] w-[33px] h-[33px]"><TreeIcon size={20} /></ToolBtn>
                <span className="ml-[6px] block w-px h-[26px] bg-[#8a8a8a]" />
                <span className="ml-[14px]"><PlayIcon /></span>
                <span className="ml-[5px] block w-0 h-0 border-x-[3px] border-x-transparent border-t-[4px] border-t-[#9a9a9a]" />
                <span className="ml-[15px]"><CubeIcon /></span>
                <span className="ml-[14px]"><CubeGreenIcon /></span>
                <Caret cls="ml-[3px]" />
                <span className="ml-[8px] w-[43px] h-[33px] rounded-[3px] bg-[#d2d2d2] border border-[#c6c6c6] flex items-center">
                  <span className="w-[31px] h-full flex items-center justify-center border-r border-[#bcbcbc]"><LampIcon /></span>
                  <Caret cls="ml-[2px]" />
                </span>
                <span className="ml-[12px] w-[16px] h-[16px] bg-[#2e2e2e] border border-[#777]" />
                <Caret cls="ml-[7px]" />
              </div>
            </div>
          </div>
        </div>

        {/* mouse cursor */}
        <svg width="12" height="22" viewBox="0 0 12 22" className="absolute left-[472px] top-[24px] block">
          <path d="M6 1l5 6H1zM1 15h10l-5 6z" fill="#2a2a2a" stroke="#fff" />
          <path d="M1 11h10" stroke="#fff" />
        </svg>
      </div>

      {/* dock */}
      <div className="h-[68px] shrink-0 bg-[#20151f] flex items-center">
        {[
          [<Firefox />, 1, ""],
          [<FilesIcon />, 2, ""],
          [<Writer />, 0, ""],
          [<SoftwareIcon />, 0, ""],
          [<LoDoc />, 1, ""],
          [<AcroDoc />, 1, "bg-[#463f46]"],
        ].map(([icon, dots, bg], i) => (
          <div key={i} className="relative w-[72px] h-[68px] flex items-center justify-center">
            <span className={`absolute left-[4px] top-[2px] w-[64px] h-[64px] rounded-[4px] ${bg}`} />
            <span className="relative -mt-[2px]">{icon}</span>
            <span className="absolute bottom-[2px] left-0 w-full flex justify-center gap-[3px]">
              {Array.from({ length: dots }).map((_, k) => (
                <span key={k} className="block w-[6px] h-[6px] rounded-full bg-[#e95420]" />
              ))}
            </span>
          </div>
        ))}
        <div className="ml-auto mr-[21px] grid grid-cols-3 gap-[6px]">
          {Array.from({ length: 9 }).map((_, i) => (
            <span key={i} className="block w-[6px] h-[6px] rounded-[1px] bg-[#eeeeee]" />
          ))}
        </div>
      </div>
    </div>
  );
}
